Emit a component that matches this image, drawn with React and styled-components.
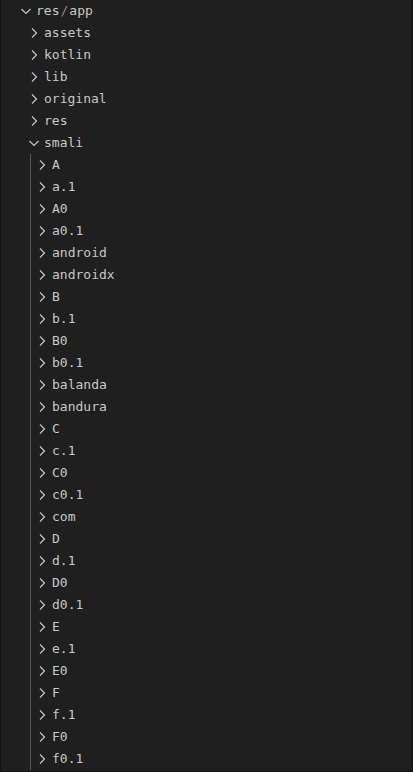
import React from 'react'
import styled, { createGlobalStyle } from 'styled-components'

const GlobalStyle = createGlobalStyle`
  html, body {
    margin: 0;
    padding: 0;
    background: #1f1f1f;
  }
  #root {
    height: 100vh;
  }
`

const smaliChildren = [
  'A', 'a.1', 'A0', 'a0.1', 'android', 'androidx', 'B', 'b.1', 'B0', 'b0.1',
  'balanda', 'bandura', 'C', 'c.1', 'C0', 'c0.1', 'com', 'D', 'd.1', 'D0',
  'd0.1', 'E', 'e.1', 'E0', 'F', 'f.1', 'F0', 'f0.1',
]

const topFolders = ['assets', 'kotlin', 'lib', 'original', 'res']

function Chevron({ open }) {
  return (
    <Twistie>
      <svg width="16" height="16" viewBox="0 0 16 16">
        {open ? (
          <polyline points="3.5,6 8,10.5 12.5,6" fill="none" stroke="#c5c5c5" strokeWidth="1.2" />
        ) : (
          <polyline points="6,3.5 10.5,8 6,12.5" fill="none" stroke="#c5c5c5" strokeWidth="1.2" />
        )}
      </svg>
    </Twistie>
  )
}

function Row({ depth, open, children }) {
  return (
    <RowWrap depth={depth}>
      <Chevron open={open} />
      <Label>{children}</Label>
    </RowWrap>
  )
}

export default function App() {
  return (
    <>
      <GlobalStyle />
      <Panel>
        <Row depth={0} open>
          res<Slash>/</Slash>app
        </Row>
        {topFolders.map((name) => (
          <Row key={name} depth={1}>{name}</Row>
        ))}
        <Row depth={1} open>smali</Row>
        <Group>
          <Guide />
          {smaliChildren.map((name) => (
            <Row key={name} depth={2}>{name}</Row>
          ))}
        </Group>
      </Panel>
    </>
  )
}

const Panel = styled.div`
  box-sizing: border-box;
  height: 100%;
  overflow: hidden;
  background: #1f1f1f;
  border: 1px solid #111111;
  border-top: none;
  font-family: "DejaVu Sans Mono", "Liberation Mono", monospace;
  font-size: 13px;
  color: #c8c8c8;
`

const RowWrap = styled.div`
  display: flex;
  align-items: center;
  height: 22px;
  padding-left: ${(p) => 17 + p.depth * 8}px;
`

const Twistie = styled.span`
  display: flex;
  align-items: center;
  justify-content: center;
  width: 16px;
  height: 22px;
  margin-right: 2px;
  flex-shrink: 0;
`

const Label = styled.span`
  white-space: pre;
  line-height: 22px;
`

const Slash = styled.span`
  color: #8a8a8a;
  margin: 0 1px;
`

const Group = styled.div`
  position: relative;
`

const Guide = styled.div`
  position: absolute;
  left: 29px;
  top: 0;
  bottom: 0;
  width: 1px;
  background: #585858;
`
